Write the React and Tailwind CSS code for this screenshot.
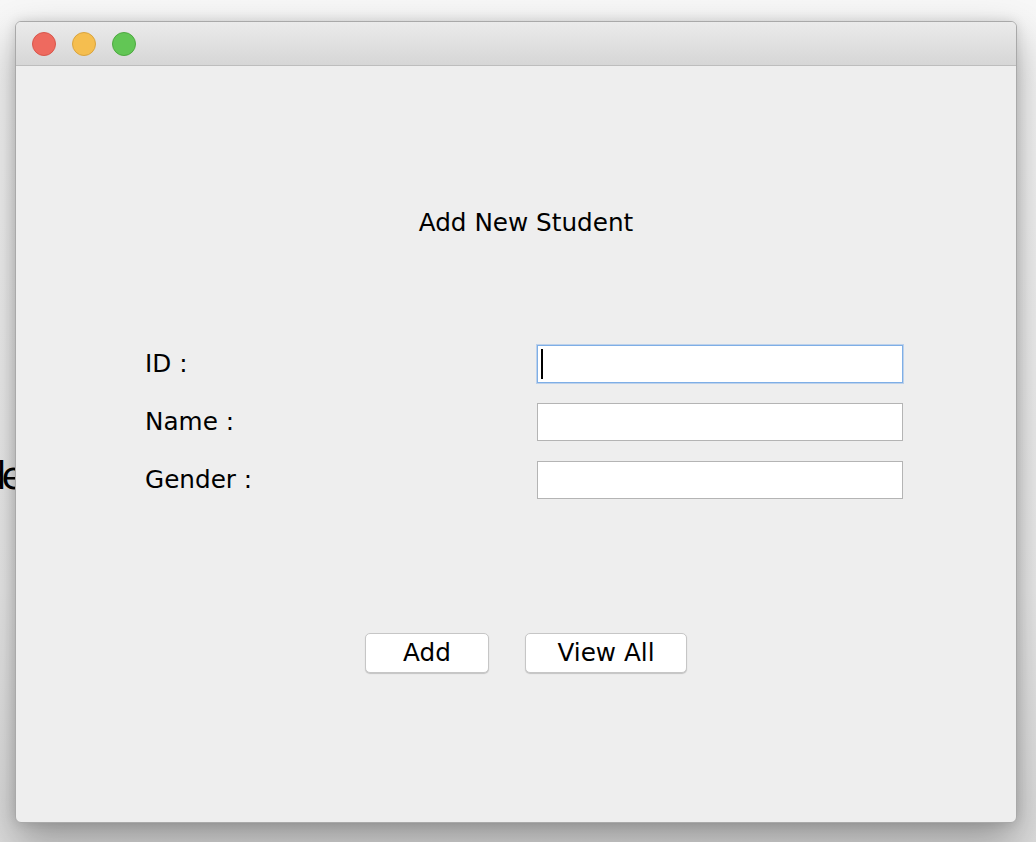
import React from 'react';

const font = { fontFamily: '"DejaVu Sans", "Liberation Sans", sans-serif' };

const Field = ({ label, focused }) => (
  <div className="flex items-center h-[38px]">
    <div className="w-[521px] shrink-0 pl-[129px] text-[24.7px] leading-none text-black">{label}</div>
    <div
      className={
        focused
          ? 'relative w-[366px] h-[38px] bg-white border border-[#7eaee6] shadow-[0_0_0_1px_rgba(126,174,230,0.45)]'
          : 'w-[366px] h-[38px] bg-white border border-[#b4b4b4]'
      }
    >
      {focused && <div className="absolute left-[3px] top-[3px] w-[2px] h-[30px] bg-black" />}
    </div>
  </div>
);

const Button = ({ children, width }) => (
  <button
    className={`${width} h-[40px] bg-white rounded-[5px] border border-[#c6c6c6] shadow-[0_1px_1px_rgba(0,0,0,0.18)] text-[24.7px] leading-none text-black`}
  >
    {children}
  </button>
);

const App = () => {
  return (
    <div
      className="relative w-[1036px] h-[842px] overflow-hidden bg-[linear-gradient(180deg,#f7f7f7_0%,#ececec_70%,#dcdcdc_100%)] pt-[21px] pl-[15px]"
      style={font}
    >
      {/* stray text peeking out left of the window */}
      <div className="absolute left-0 top-[458px] w-[15px] h-[50px] overflow-hidden">
        <span className="absolute left-[-17px] top-0 text-[37px] leading-none tracking-[-5px] text-black whitespace-nowrap">de</span>
      </div>

      <div className="relative w-[1002px] h-[802px] rounded-[6px] border border-[#a9a9a9] bg-[#eeeeee] shadow-[0_18px_40px_rgba(0,0,0,0.33),0_0_12px_rgba(0,0,0,0.12)] overflow-hidden flex flex-col">
        {/* title bar */}
        <div className="h-[44px] shrink-0 border-b border-[#bdbdbd] bg-[linear-gradient(180deg,#ebebeb,#d6d6d6)] flex items-center gap-[16px] pl-[16px]">
          <span className="w-[24px] h-[24px] rounded-full bg-[#ee6a5f] border border-[#d8574c]" />
          <span className="w-[24px] h-[24px] rounded-full bg-[#f5be4f] border border-[#d9a43f]" />
          <span className="w-[24px] h-[24px] rounded-full bg-[#62c655] border border-[#4ea941]" />
        </div>

        {/* content */}
        <div className="flex-1 flex flex-col">
          <div className="pt-[141px] pl-[20px] text-center text-[24.7px] leading-[32px] text-black">Add New Student</div>

          <div className="mt-[106px] flex flex-col gap-[20px]">
            <Field label="ID :" focused />
            <Field label="Name :" />
            <Field label="Gender :" />
          </div>

          <div className="mt-[134px] flex pl-[349px] gap-[36px]">
            <Button width="w-[124px]">Add</Button>
            <Button width="w-[162px]">View All</Button>
          </div>
        </div>
      </div>
    </div>
  );
};

export default App;
